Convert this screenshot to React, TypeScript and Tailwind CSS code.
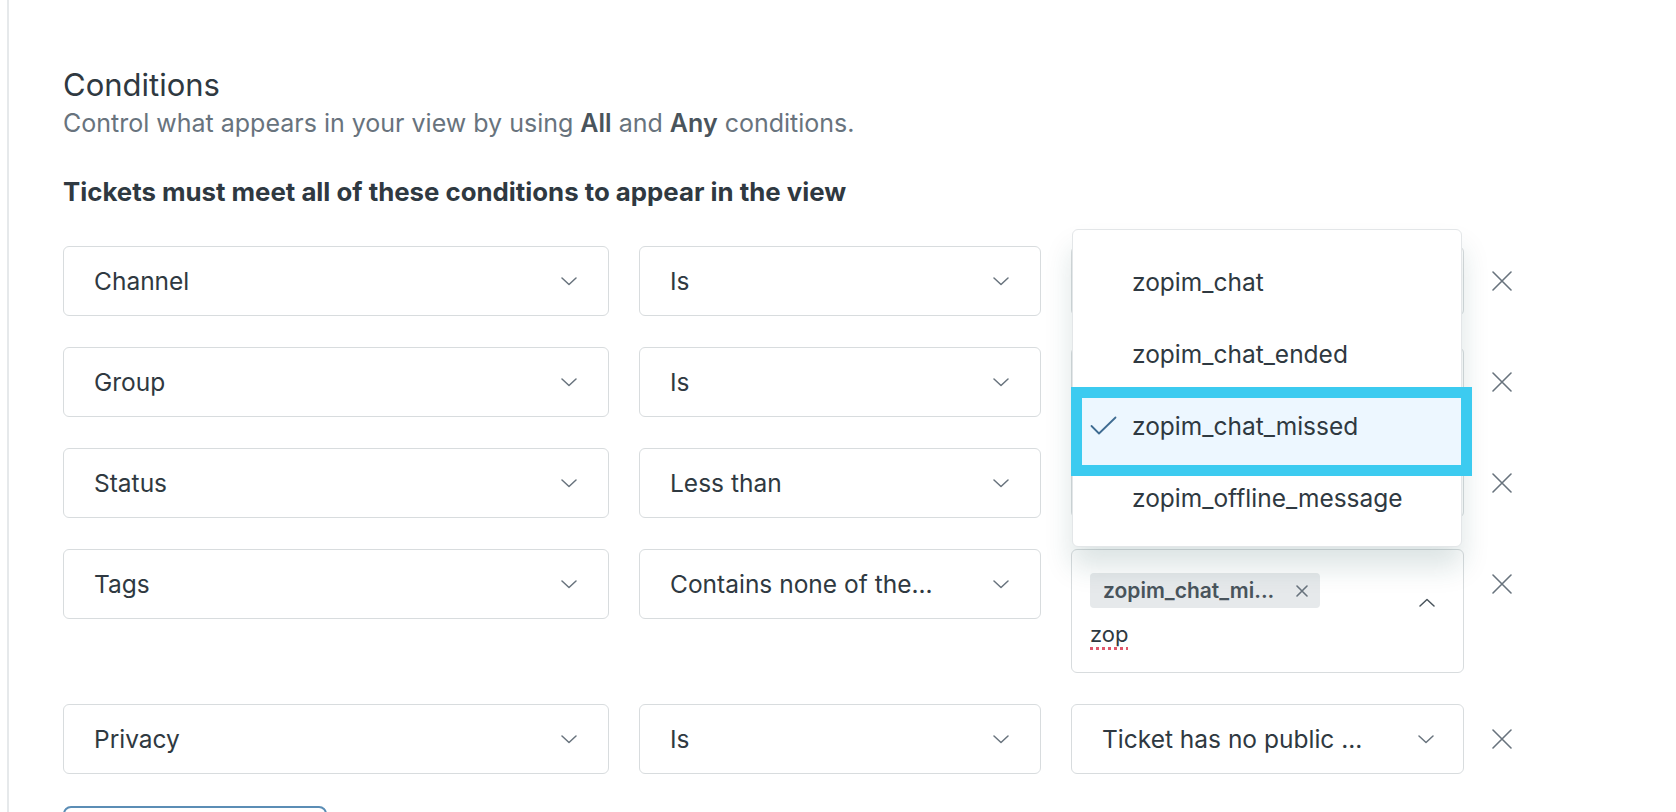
import React from "react";

const Chevron = ({ up = false, color = "#68737d" }: { up?: boolean; color?: string }) => (
  <svg width="16" height="9" viewBox="0 0 16 9" fill="none">
    <path d={up ? "M1 8L8 1.5L15 8" : "M1 1L8 7.5L15 1"} stroke={color} strokeWidth="1.5" strokeLinecap="round" strokeLinejoin="round" />
  </svg>
);

const XIcon = () => (
  <svg width="20" height="20" viewBox="0 0 20 20" fill="none">
    <path d="M1 1L19 19M19 1L1 19" stroke="#68737d" strokeWidth="1.6" strokeLinecap="round" />
  </svg>
);

const Box = ({ text, w, chevronPr = "pr-[31px]" }: { text: string; w: string; chevronPr?: string }) => (
  <div className={`${w} h-[70px] shrink-0 flex items-center justify-between pl-[30px] ${chevronPr} bg-white border border-[#d8dcde] rounded-[6px]`}>
    <span className="text-[24.5px] text-[#2f3941] truncate">{text}</span>
    <Chevron />
  </div>
);

const Row = ({ a, b, c, third }: { a: string; b: string; c?: string; third?: React.ReactNode }) => (
  <div className="flex items-start">
    <Box text={a} w="w-[546px]" />
    <div className="w-[30px] shrink-0" />
    <Box text={b} w="w-[402px]" />
    <div className="w-[30px] shrink-0" />
    {third ?? <Box text={c ?? ""} w="w-[393px]" chevronPr="pr-[29px]" />}
    <div className="w-[28px] shrink-0" />
    <div className="h-[70px] flex items-center">
      <XIcon />
    </div>
  </div>
);

const items = ["zopim_chat", "zopim_chat_ended", "zopim_chat_missed", "zopim_offline_message"];

export default function App() {
  return (
    <div
      className="w-[1676px] h-[812px] overflow-hidden bg-white flex"
      style={{ fontFamily: "Inter, 'Noto Sans', sans-serif" }}
    >
      <div className="w-[7px] shrink-0" />
      <div className="w-[2px] shrink-0 bg-[#e6e9eb]" />
      <div className="pl-[54px] pt-[66px] flex flex-col">
        <h2 className="text-[31px] leading-[38px] font-normal text-[#2f3941]">Conditions</h2>
        <p className="mt-[3px] text-[25px] leading-[32px] text-[#68737d]">
          Control what appears in your view by using <b className="font-semibold text-[#49545c]">All</b> and{" "}
          <b className="font-semibold text-[#49545c]">Any</b> conditions.
        </p>
        <p className="mt-[37px] text-[25.8px] leading-[32px] font-bold text-[#2f3941]">
          Tickets must meet all of these conditions to appear in the view
        </p>

        <div className="relative mt-[38px] flex flex-col gap-[31px]">
          <Row a="Channel" b="Is" c="" />
          <Row a="Group" b="Is" c="" />
          <Row a="Status" b="Less than" c="" />
          <Row
            a="Tags"
            b="Contains none of the..."
            third={
              <div className="w-[393px] h-[124px] shrink-0 bg-white border border-[#d8dcde] rounded-[6px] relative pl-[18px] pt-[23px]">
                <div className="flex items-center">
                  <div className="h-[35px] w-[230px] rounded-[4px] bg-[#e6e9eb] flex items-center pl-[13px] pr-[12px] justify-between">
                    <span className="text-[21px] font-semibold text-[#49545c]">zopim_chat_mi...</span>
                    <svg width="12" height="12" viewBox="0 0 12 12" fill="none">
                      <path d="M1 1L11 11M11 1L1 11" stroke="#68737d" strokeWidth="1.6" strokeLinecap="round" />
                    </svg>
                  </div>
                </div>
                <div className="absolute left-[347px] top-[48px]">
                  <Chevron up color="#49545c" />
                </div>
                <div className="mt-[11px] text-[22px] leading-[30px] text-[#2f3941]">
                  <span className="underline decoration-dotted decoration-[#e0566a] decoration-[3px] underline-offset-[5px]">zop</span>
                </div>
              </div>
            }
          />
          <Row a="Privacy" b="Is" c="Ticket has no public ..." />

          <div className="mt-[1px] w-[264px] h-[60px] border-2 border-[#5b8db5] rounded-[8px] bg-white" />

          {/* Open dropdown menu */}
          <div className="absolute left-[1009px] top-[-17px] w-[390px] h-[318px] bg-white border border-[#e3e6e8] rounded-[6px] shadow-[0_20px_28px_0_rgba(23,73,77,0.15)] pt-[16px]">
            <div className="absolute left-[-2px] top-[157px] w-[401px] h-[89px] border-[11px] border-[#3ccbf0] bg-[#edf7ff]" />
            {items.map((t, i) => (
              <div key={t} className="relative h-[72px] flex items-center pl-[59px]">
                {i === 2 && (
                  <svg className="absolute left-[17px] top-[26px]" width="27" height="19" viewBox="0 0 27 19" fill="none">
                    <path d="M1.5 10L9 17.5L25.5 1.5" stroke="#3f6c92" strokeWidth="1.8" strokeLinecap="round" strokeLinejoin="round" />
                  </svg>
                )}
                <span className="text-[24.5px] text-[#2f3941]">{t}</span>
              </div>
            ))}
          </div>
        </div>
      </div>
    </div>
  );
}
